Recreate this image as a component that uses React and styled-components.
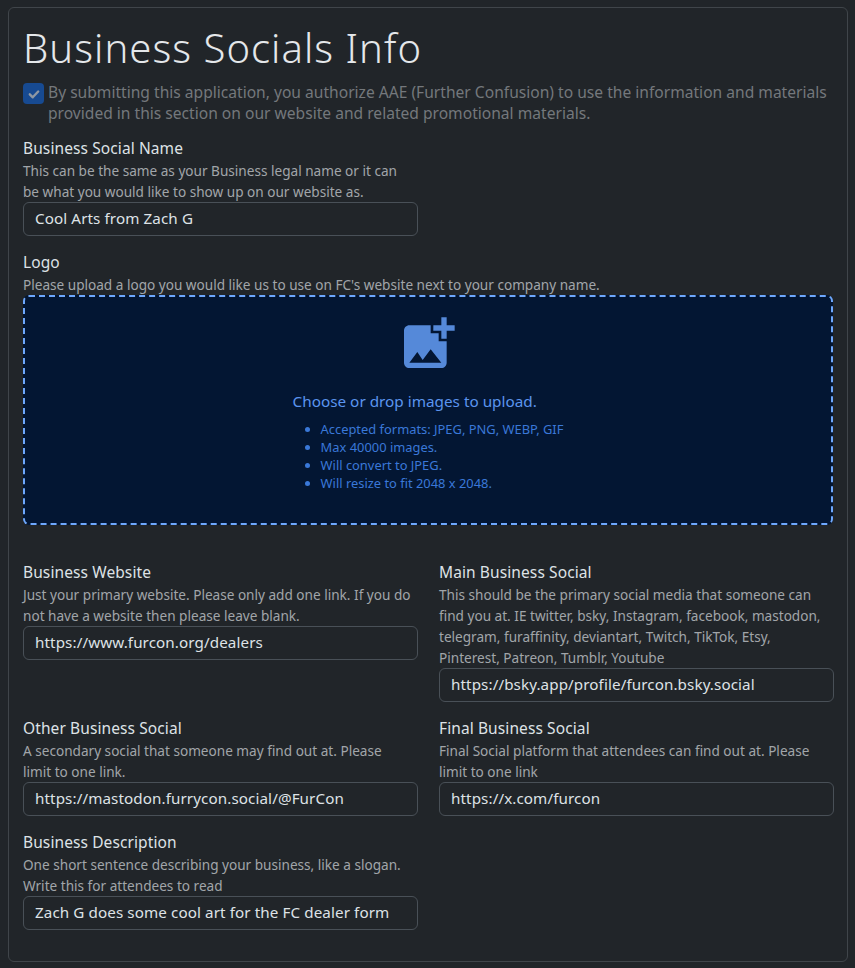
import React from "react";
import styled, { createGlobalStyle } from "styled-components";

const FONT = `"Noto Sans", "Liberation Sans", sans-serif`;

const Global = createGlobalStyle`
  html, body { margin: 0; padding: 0; background: #212529; }
  body { font-family: ${FONT}; color: #dee2e6; font-size: 16px; }
  * { box-sizing: border-box; }
`;

const Page = styled.div`
  padding: 7px 7px 6px 8px;
`;
const Card = styled.section`
  border: 1px solid #40454a;
  border-radius: 6px;
  padding: 14px 14px 15px;
  height: 955px;
`;
const Title = styled.h1`
  margin: 0 0 8px;
  font-size: 40px;
  font-weight: 300;
  line-height: 52px;
  letter-spacing: 1.05px;
  color: #e4e7ea;
`;
const Consent = styled.label`
  display: flex;
  gap: 4px;
  margin-bottom: 14px;
  font-size: 15.6px;
  line-height: 21px;
  color: #74787c;
`;
const Check = styled.span`
  flex: none;
  width: 21px;
  height: 21px;
  margin-top: 1px;
  border-radius: 4px;
  background: #174a91;
  display: flex;
  align-items: center;
  justify-content: center;
`;
const Field = styled.div`
  margin-bottom: 16.3px;
`;
const Narrow = styled(Field)`
  width: 395px;
`;
const Label = styled.div`
  margin-bottom: 1px;
  font-size: 15.5px;
  line-height: 21px;
  letter-spacing: 0.1px;
  color: #dee2e6;
`;
const Help = styled.div`
  font-size: 13.6px;
  line-height: 21px;
  color: #a1a5a9;
`;
const WrappedHelp = styled(Help)`
  padding-right: 6px;
`;
const Input = styled.div`
  height: 33.7px;
  border: 1px solid #495057;
  border-radius: 6px;
  padding: 0 11px;
  font-size: 15.2px;
  line-height: 31.7px;
  letter-spacing: 0.1px;
  color: #dee2e6;
`;
const Drop = styled.div`
  height: 230px;
  border: 2px dashed #6ea8fe;
  border-radius: 6px;
  background: #031633;
  padding-top: 15px;
  display: flex;
  flex-direction: column;
  align-items: center;
  margin-bottom: 37px;
`;
const DropBody = styled.div`
  width: max-content;
  margin-top: 14px;
`;
const DropTitle = styled.div`
  font-size: 15.3px;
  line-height: 22px;
  color: #5b94ee;
`;
const Rules = styled.ul`
  margin: 8px 0 0;
  padding: 0 0 0 28px;
  font-size: 12.9px;
  line-height: 18px;
  color: #3a78d8;
`;
const Grid = styled.div`
  display: grid;
  grid-template-columns: 395px 395px;
  column-gap: 21px;
  align-items: start;
`;

const TextField = ({ label, help, value }) => (
  <Field>
    <Label>{label}</Label>
    <WrappedHelp>{help}</WrappedHelp>
    <Input>{value}</Input>
  </Field>
);

export default function App() {
  return (
    <Page>
      <Global />
      <Card>
        <Title>Business Socials Info</Title>
        <Consent>
          <Check>
            <svg width="14" height="14" viewBox="0 0 20 20" fill="none" stroke="#8f98a3" strokeWidth="3.4" strokeLinecap="round" strokeLinejoin="round">
              <path d="M4 10.5l4.2 4.2L16 6.5" />
            </svg>
          </Check>
          <span>
            By submitting this application, you authorize AAE (Further Confusion) to use the information and materials provided in this section on our website and related promotional materials.
          </span>
        </Consent>
        <Narrow>
          <Label>Business Social Name</Label>
          <WrappedHelp>This can be the same as your Business legal name or it can be what you would like to show up on our website as.</WrappedHelp>
          <Input>Cool Arts from Zach G</Input>
        </Narrow>
        <Label>Logo</Label>
        <Help>Please upload a logo you would like us to use on FC's website next to your company name.</Help>
        <Drop>
          <svg width="64" height="64" viewBox="0 0 24 24" fill="#5589d9">
            <path d="M19 7v2.99s-1.99.01-2 0V7h-3s.01-1.99 0-2h3V2h2v3h3v2h-3zm-3 4V8h-3V5H5c-1.1 0-2 .9-2 2v12c0 1.1.9 2 2 2h12c1.1 0 2-.9 2-2v-8h-3zM5 19l3-4 2 3 3-4 4 5H5z" />
          </svg>
          <DropBody>
            <DropTitle>Choose or drop images to upload.</DropTitle>
            <Rules>
              <li>Accepted formats: JPEG, PNG, WEBP, GIF</li>
              <li>Max 40000 images.</li>
              <li>Will convert to JPEG.</li>
              <li>Will resize to fit 2048 x 2048.</li>
            </Rules>
          </DropBody>
        </Drop>
        <Grid>
          <TextField label="Business Website" help="Just your primary website. Please only add one link. If you do not have a website then please leave blank." value="https://www.furcon.org/dealers" />
          <TextField label="Main Business Social" help="This should be the primary social media that someone can find you at. IE twitter, bsky, Instagram, facebook, mastodon, telegram, furaffinity, deviantart, Twitch, TikTok, Etsy, Pinterest, Patreon, Tumblr, Youtube" value="https://bsky.app/profile/furcon.bsky.social" />
          <TextField label="Other Business Social" help="A secondary social that someone may find out at. Please limit to one link." value="https://mastodon.furrycon.social/@FurCon" />
          <TextField label="Final Business Social" help="Final Social platform that attendees can find out at. Please limit to one link" value="https://x.com/furcon" />
          <TextField label="Business Description" help="One short sentence describing your business, like a slogan. Write this for attendees to read" value="Zach G does some cool art for the FC dealer form" />
        </Grid>
      </Card>
    </Page>
  );
}
